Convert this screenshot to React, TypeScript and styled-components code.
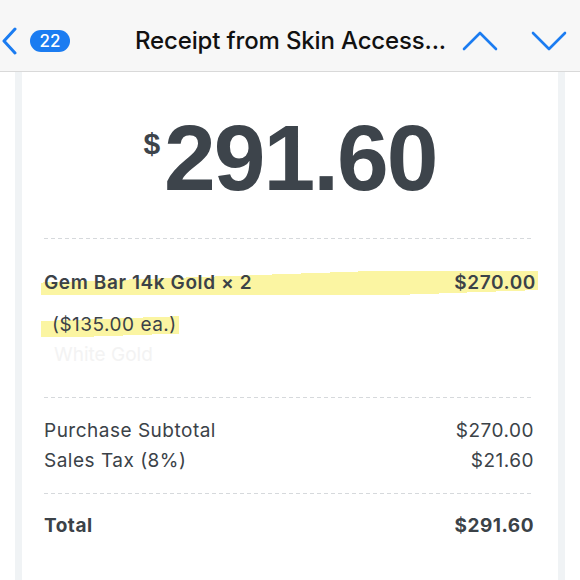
import styled, { createGlobalStyle } from "styled-components";

const GlobalStyle = createGlobalStyle`
  html, body {
    margin: 0;
    padding: 0;
    background: #ffffff;
  }
  body {
    font-family: Inter, "Liberation Sans", sans-serif;
  }
`;

const Page = styled.div`
  width: 580px;
  height: 580px;
  overflow: hidden;
  display: flex;
  flex-direction: column;
  background: #ffffff;
`;

const Header = styled.header`
  height: 72px;
  box-sizing: border-box;
  padding-top: 10px;
  flex-shrink: 0;
  display: flex;
  align-items: center;
  background: #f7f7f7;
  border-bottom: 1px solid #d9d9d9;
`;

const IconButton = styled.svg<{ $ml: number }>`
  display: block;
  flex-shrink: 0;
  margin-left: ${(p) => p.$ml}px;
  fill: none;
  stroke: #1b7cf1;
  stroke-linecap: round;
  stroke-linejoin: round;
`;

const Badge = styled.span`
  margin-left: 13px;
  width: 40px;
  height: 22px;
  border-radius: 11px;
  background: #1b7cf1;
  color: #ffffff;
  font-size: 17px;
  font-weight: 500;
  display: flex;
  align-items: center;
  justify-content: center;
`;

const Title = styled.h1`
  margin: 0 0 0 65px;
  width: 312px;
  flex-shrink: 0;
  font-size: 24px;
  font-weight: 500;
  color: #111111;
  white-space: nowrap;
  letter-spacing: -0.15px;
`;

const Card = styled.main`
  flex: 1;
  margin: 0 15px;
  padding: 0 24px 0 22px;
  border-left: 7px solid #f0f3f5;
  border-right: 7px solid #f0f3f5;
  color: #3b4248;
`;

const AmountBlock = styled.div`
  height: 166px;
  display: flex;
  justify-content: center;
  align-items: flex-start;
  padding-top: 40px;
  box-sizing: border-box;
  padding-left: 2px;
`;

const Currency = styled.span`
  font-family: "Liberation Sans", Arial, sans-serif;
  font-size: 30px;
  font-weight: 700;
  margin-top: 15px;
  margin-right: 4px;
  color: #3d444b;
`;

const Amount = styled.span`
  font-family: "Liberation Sans", Arial, sans-serif;
  font-size: 93px;
  font-weight: 700;
  line-height: 1;
  letter-spacing: -2px;
  color: #3d444b;
`;

const Divider = styled.div`
  height: 1px;
  background-image: linear-gradient(to right, #d6d9dc 55%, transparent 55%);
  background-size: 7px 1px;
`;

const Row = styled.div<{ $mt: number; $weight?: number }>`
  display: flex;
  justify-content: space-between;
  align-items: center;
  margin-top: ${(p) => p.$mt}px;
  font-size: 19px;
  line-height: 24px;
  letter-spacing: 0.5px;
  font-weight: ${(p) => p.$weight ?? 400};
`;

const Rule = styled.div<{ $mt: number }>`
  margin-top: ${(p) => p.$mt}px;
`;

const Highlight = styled.div<{ $width?: string; $indent?: number }>`
  display: flex;
  justify-content: space-between;
  width: ${(p) => p.$width ?? "auto"};
  margin-left: -3px;
  padding: 0 2px 0 ${(p) => 3 + (p.$indent ?? 0)}px;
  background: linear-gradient(
    178deg,
    transparent 28%,
    #fbf5a2 28%,
    #fbf5a2 88%,
    transparent 88%
  );
`;

const ItemRow = styled(Row)`
  font-weight: 600;
  letter-spacing: 0.6px;
  margin-right: -4px;
`;

const Faint = styled.div`
  margin-top: 6px;
  font-size: 19px;
  line-height: 24px;
  color: #f3f3f3;
  padding-left: 10px;
`;

export default function App() {
  return (
    <Page>
      <GlobalStyle />
      <Header>
        <IconButton $ml={2} width="15" height="28" viewBox="0 0 15 28" strokeWidth={3}>
          <polyline points="13,2 2,14 13,26" />
        </IconButton>
        <Badge>22</Badge>
        <Title>Receipt from Skin Access...</Title>
        <IconButton $ml={15} width="36" height="20" viewBox="0 0 36 20" strokeWidth={2.6}>
          <polyline points="2,18 18,2 34,18" />
        </IconButton>
        <IconButton $ml={33} width="36" height="20" viewBox="0 0 36 20" strokeWidth={2.6}>
          <polyline points="2,2 18,18 34,2" />
        </IconButton>
      </Header>
      <Card>
        <AmountBlock>
          <Currency>$</Currency>
          <Amount>291.60</Amount>
        </AmountBlock>
        <Divider />
        <ItemRow $mt={32}>
          <Highlight $width="100%">
            <span>Gem Bar 14k Gold × 2</span>
            <span>$270.00</span>
          </Highlight>
        </ItemRow>
        <Row $mt={18}>
          <Highlight $indent={8}>
            <span>($135.00 ea.)</span>
          </Highlight>
        </Row>
        <Faint>White Gold</Faint>
        <Rule $mt={30}>
          <Divider />
        </Rule>
        <Row $mt={21}>
          <span>Purchase Subtotal</span>
          <span>$270.00</span>
        </Row>
        <Row $mt={6}>
          <span>Sales Tax (8%)</span>
          <span>$21.60</span>
        </Row>
        <Rule $mt={20}>
          <Divider />
        </Rule>
        <Row $mt={20} $weight={700}>
          <span>Total</span>
          <span>$291.60</span>
        </Row>
      </Card>
    </Page>
  );
}
